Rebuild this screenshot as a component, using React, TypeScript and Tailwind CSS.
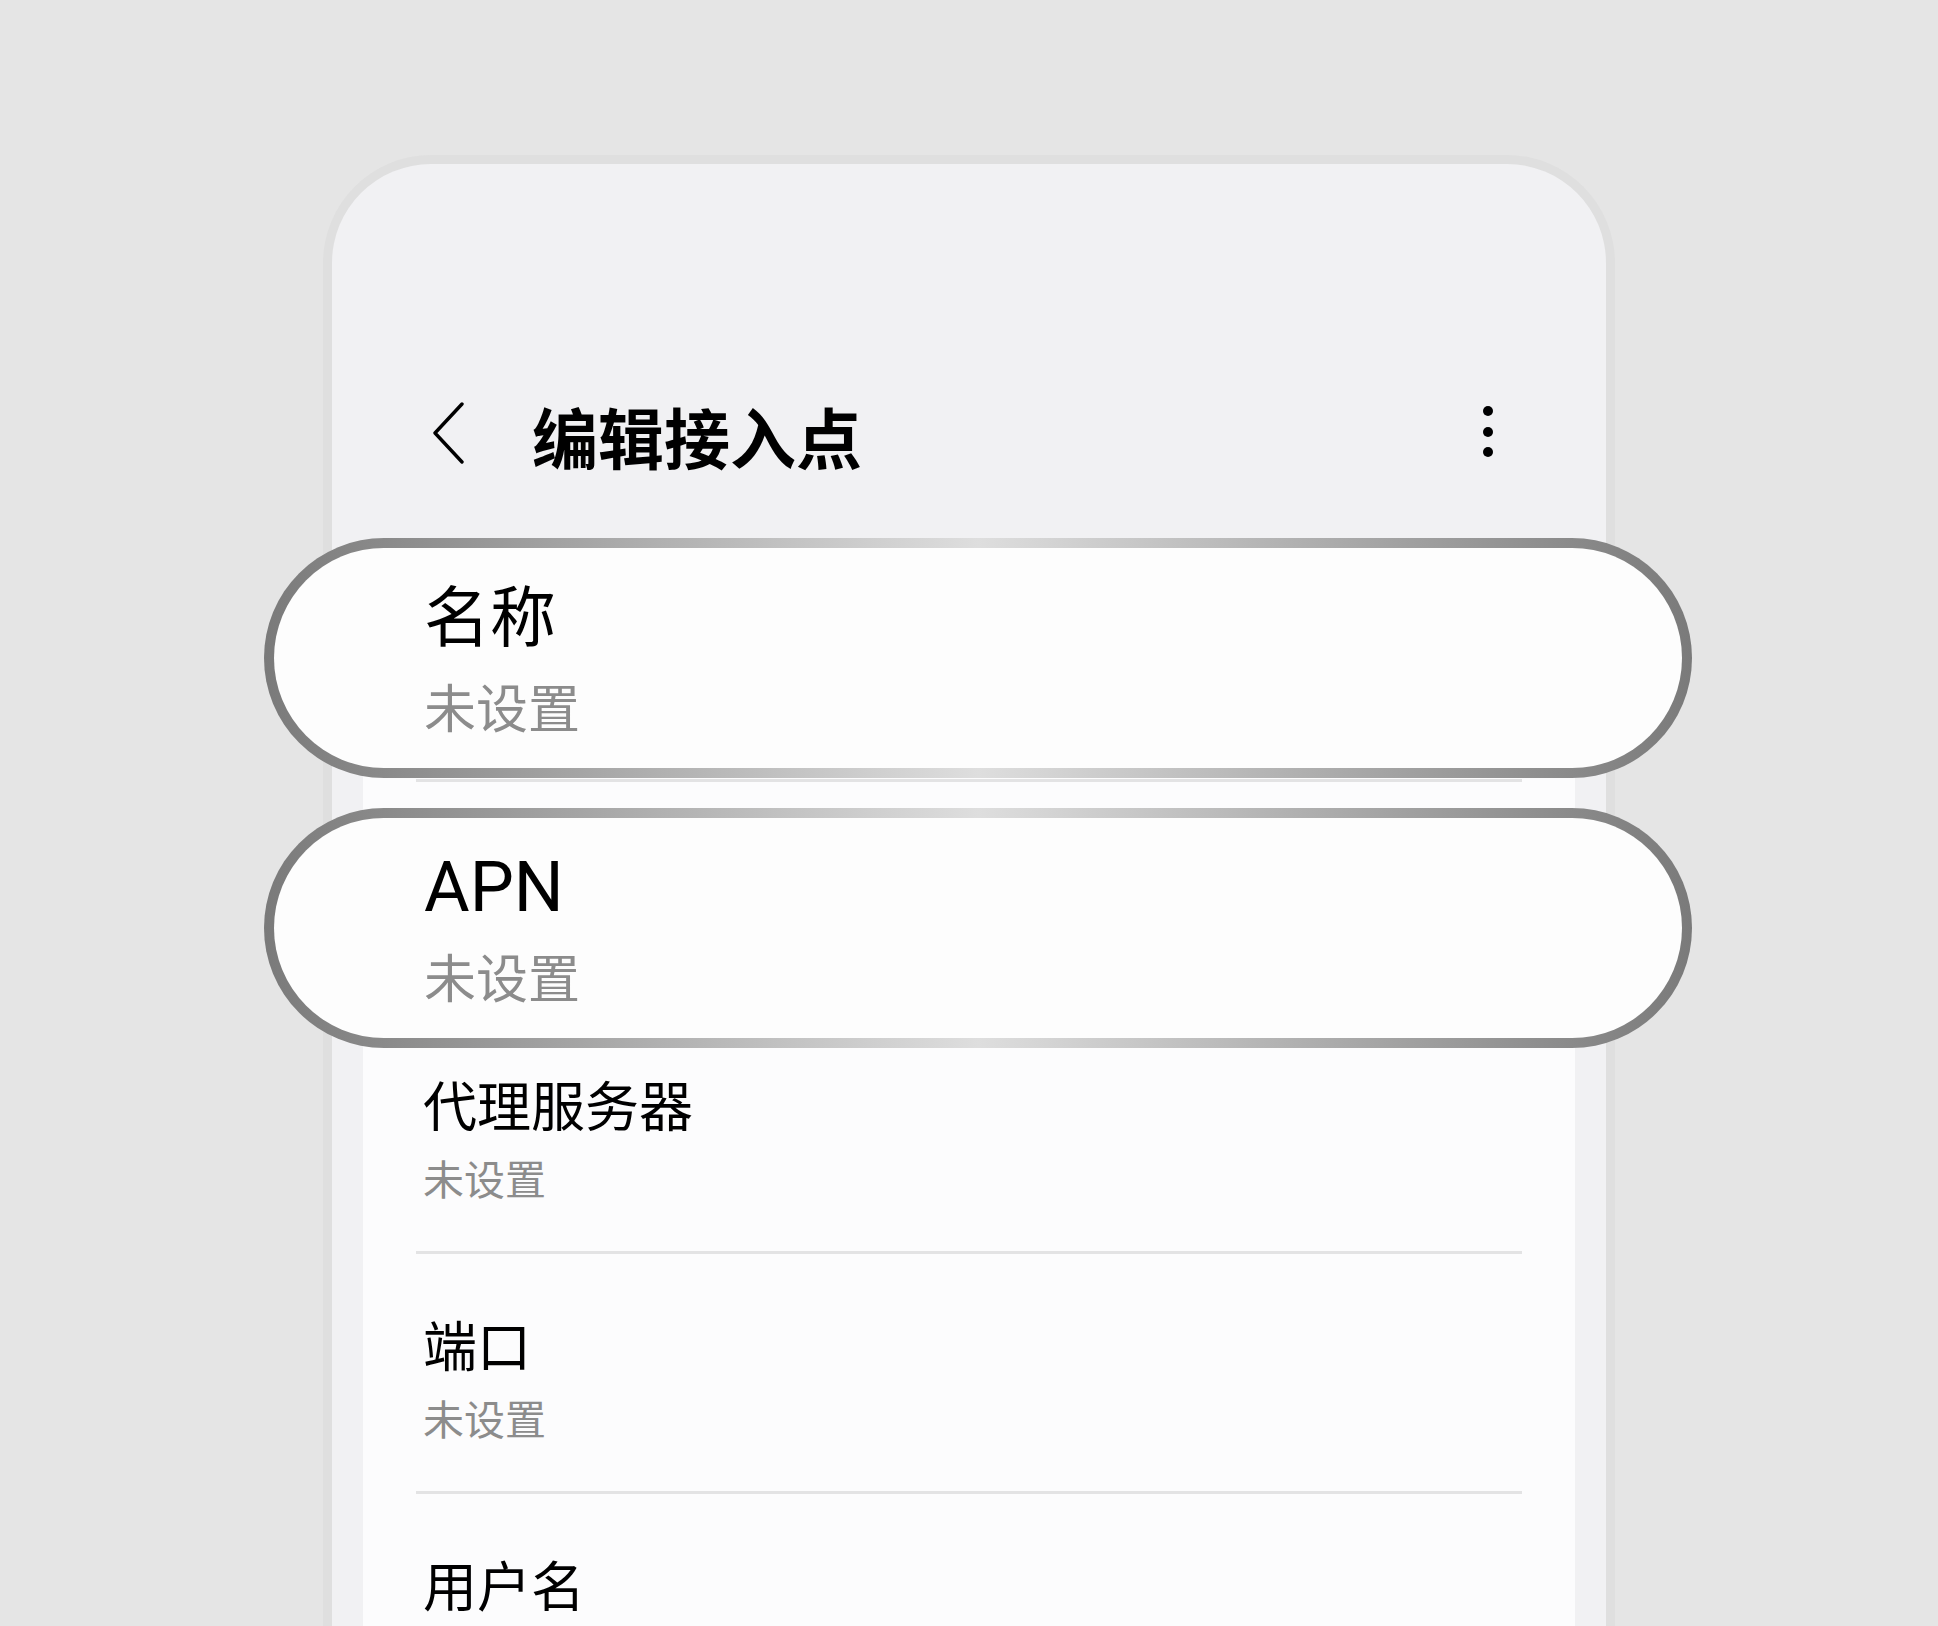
import * as React from "react";

const cjk = "font-['Noto_Sans_CJK_SC','Noto_Sans',sans-serif]";

function Pill({ title, latin, className = "" }: { title: string; latin?: boolean; className?: string }) {
  return (
    <div
      className={`relative z-10 -ml-[99px] -mr-[117px] rounded-full bg-linear-to-r from-[#7a7a7a] via-[#dedede] to-[#7a7a7a] p-[10px] ${className}`}
    >
      <div className="rounded-full bg-[#fdfdfd] pl-[150px] pt-[25px] pb-[31px]">
        {latin ? (
          <div className="pt-[5px] font-['Roboto','Liberation_Sans',sans-serif] text-[70px] leading-[78px] text-black">
            {title}
          </div>
        ) : (
          <div className={`${cjk} text-[66px] leading-[78px] text-black`}>{title}</div>
        )}
        <div className={`${cjk} ${latin ? "mt-[19px]" : "mt-[24px]"} text-[52px] leading-[62px] text-[#8c8c8c]`}>
          未设置
        </div>
      </div>
    </div>
  );
}

function Row({ title, sub, first, divider = true }: { title: string; sub?: string; first?: boolean; divider?: boolean }) {
  return (
    <div>
      <div className={`pl-[60px] ${first ? "pt-[24px]" : "pt-[58px]"} pb-[50px]`}>
        <div className={`${cjk} text-[54px] leading-[64px] text-black`}>{title}</div>
        {sub && <div className={`${cjk} mt-[17px] text-[41px] leading-[48px] text-[#8c8c8c]`}>{sub}</div>}
      </div>
      {divider && <div className="mx-[53px] h-[3px] bg-[#e3e3e4]" />}
    </div>
  );
}

export default function App() {
  return (
    <div className="flex h-[1626px] w-[1938px] justify-center overflow-hidden bg-[#e5e5e5] pt-[155px]">
      <div className="flex w-[1292px] flex-col rounded-t-[108px] border-[9px] border-b-0 border-[#dfdfdf] bg-[#f1f1f3]">
        {/* header */}
        <div className="flex h-[381px] shrink-0 items-start pt-[231px]">
          <svg className="ml-[100px] mt-[7px] h-[62px] w-[33px]" viewBox="0 0 33 62" fill="none">
            <path d="M30 2 L3 31 L30 60" stroke="#000" strokeWidth="3.4" strokeLinecap="round" strokeLinejoin="round" />
          </svg>
          <h1 className={`${cjk} ml-[67px] text-[66px] font-bold leading-[80px] text-black`}>编辑接入点</h1>
          <div className="ml-auto mr-[113px] mt-[11px] flex flex-col gap-[10.5px]">
            <span className="h-[10px] w-[10px] rounded-full bg-black" />
            <span className="h-[10px] w-[10px] rounded-full bg-black" />
            <span className="h-[10px] w-[10px] rounded-full bg-black" />
          </div>
        </div>

        {/* list card */}
        <div className="mx-[31px] flex-1 bg-[#fcfcfd]">
          <Pill title="名称" className="-mt-[7px]" />
          <div className="mx-[53px] mt-[1px] h-[3px] bg-[#e3e3e4]" />
          <Pill title="APN" latin className="mt-[26px]" />
          <Row title="代理服务器" sub="未设置" first />
          <Row title="端口" sub="未设置" />
          <Row title="用户名" divider={false} />
        </div>
      </div>
    </div>
  );
}
